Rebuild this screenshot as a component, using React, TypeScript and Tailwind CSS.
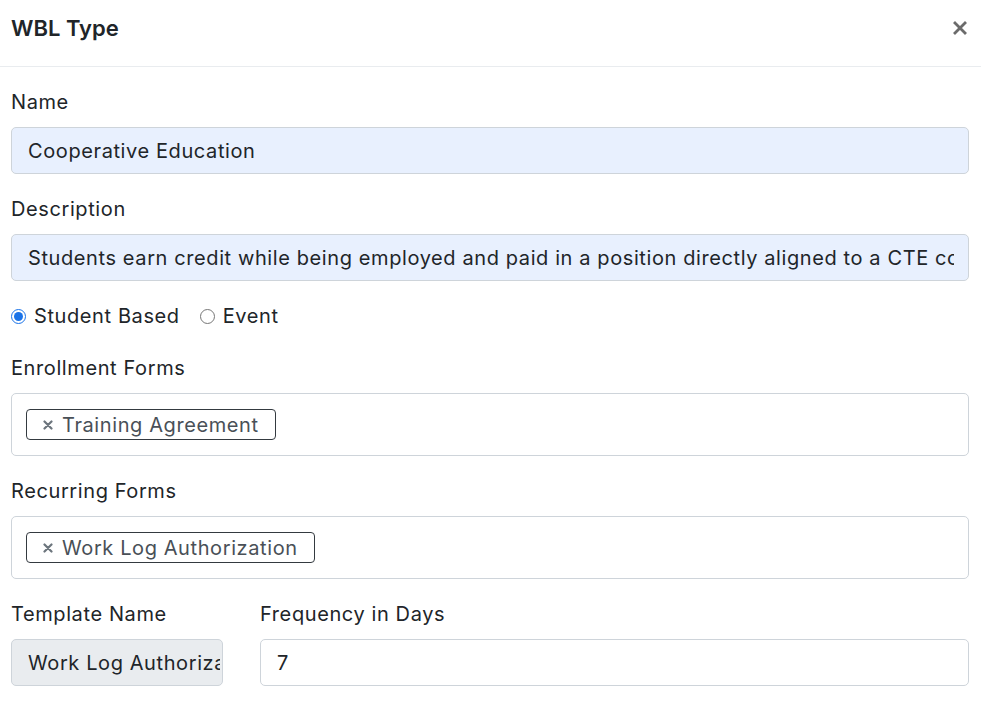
import { useState } from "react"

function Chip({ label }: { label: string }) {
  return (
    <span className="inline-flex h-[31px] items-center gap-[9px] rounded-[4px] border border-[#343a40] pl-[16px] pr-[16px] text-[#495057]">
      <svg width="10" height="10" viewBox="0 0 10 10" aria-hidden>
        <path d="M1.5 1.5 L8.5 8.5 M8.5 1.5 L1.5 8.5" stroke="#6c757d" strokeWidth="2.2" strokeLinecap="round" />
      </svg>
      <span className="leading-none">{label}</span>
    </span>
  )
}

function Radio({ checked, label, onClick }: { checked: boolean; label: string; onClick: () => void }) {
  return (
    <label className="flex cursor-pointer items-center gap-[8px]" onClick={onClick}>
      {checked ? (
        <span className="flex h-[15px] w-[15px] items-center justify-center rounded-full border-[1.5px] border-[#1a73e8] bg-white">
          <span className="h-[9px] w-[9px] rounded-full bg-[#1a73e8]" />
        </span>
      ) : (
        <span className="h-[15px] w-[15px] rounded-full border border-[#767676] bg-white" />
      )}
      <span>{label}</span>
    </label>
  )
}

export default function App() {
  const [tipo, setTipo] = useState("student")

  return (
    <div className="min-h-screen bg-white font-['Inter',sans-serif] text-[20px] tracking-[0.03em] text-[#212529]">
      {/* encabezado del modal */}
      <div className="flex items-center justify-between border-b border-[#e9ecef] pl-[11px] pr-[14px] pt-[12px] pb-[22px]">
        <h2 className="text-[22px] font-semibold leading-[32px] tracking-normal text-[#212529]">WBL Type</h2>
        <svg width="14" height="14" viewBox="0 0 14 14" aria-hidden>
          <path d="M2 2 L12 12 M12 2 L2 12" stroke="#6b6b6b" strokeWidth="2.8" strokeLinecap="square" />
        </svg>
      </div>

      <div className="pl-[11px] pr-[12px] pt-[20px]">
        <div className="mb-[20px]">
          <label className="mb-[10px] block leading-[30px]">Name</label>
          <div className="flex h-[47px] items-center rounded-[5px] border border-[#ced4da] bg-[#e8f0fe] px-[16px]">
            Cooperative Education
          </div>
        </div>

        <div className="mb-[20px]">
          <label className="mb-[10px] block leading-[30px]">Description</label>
          <div className="flex h-[47px] items-center overflow-hidden whitespace-nowrap rounded-[5px] border border-[#ced4da] bg-[#e8f0fe] pl-[16px] pr-[14px]">
            <span className="block overflow-hidden">
              Students earn credit while being employed and paid in a position directly aligned to a CTE course of study
            </span>
          </div>
        </div>

        <div className="mb-[22px] flex items-center gap-[20px] leading-[30px]">
          <Radio checked={tipo === "student"} label="Student Based" onClick={() => setTipo("student")} />
          <Radio checked={tipo === "event"} label="Event" onClick={() => setTipo("event")} />
        </div>

        <div className="mb-[20px]">
          <label className="mb-[10px] block leading-[30px]">Enrollment Forms</label>
          <div className="flex h-[63px] items-center rounded-[5px] border border-[#ced4da] bg-white px-[14px]">
            <Chip label="Training Agreement" />
          </div>
        </div>

        <div className="mb-[20px]">
          <label className="mb-[10px] block leading-[30px]">Recurring Forms</label>
          <div className="flex h-[63px] items-center rounded-[5px] border border-[#ced4da] bg-white px-[14px]">
            <Chip label="Work Log Authorization" />
          </div>
        </div>

        <div className="grid grid-cols-[212px_1fr] gap-[37px]">
          <div>
            <label className="mb-[10px] block leading-[30px]">Template Name</label>
            <div className="flex h-[47px] items-center overflow-hidden whitespace-nowrap rounded-[5px] border border-[#ced4da] bg-[#e9ecef] pl-[16px] pr-[2px]">
              <span className="block overflow-hidden">Work Log Authorization</span>
            </div>
          </div>
          <div>
            <label className="mb-[10px] block leading-[30px]">Frequency in Days</label>
            <div className="flex h-[47px] items-center rounded-[5px] border border-[#ced4da] bg-white px-[16px]">
              7
            </div>
          </div>
        </div>
      </div>
    </div>
  )
}
